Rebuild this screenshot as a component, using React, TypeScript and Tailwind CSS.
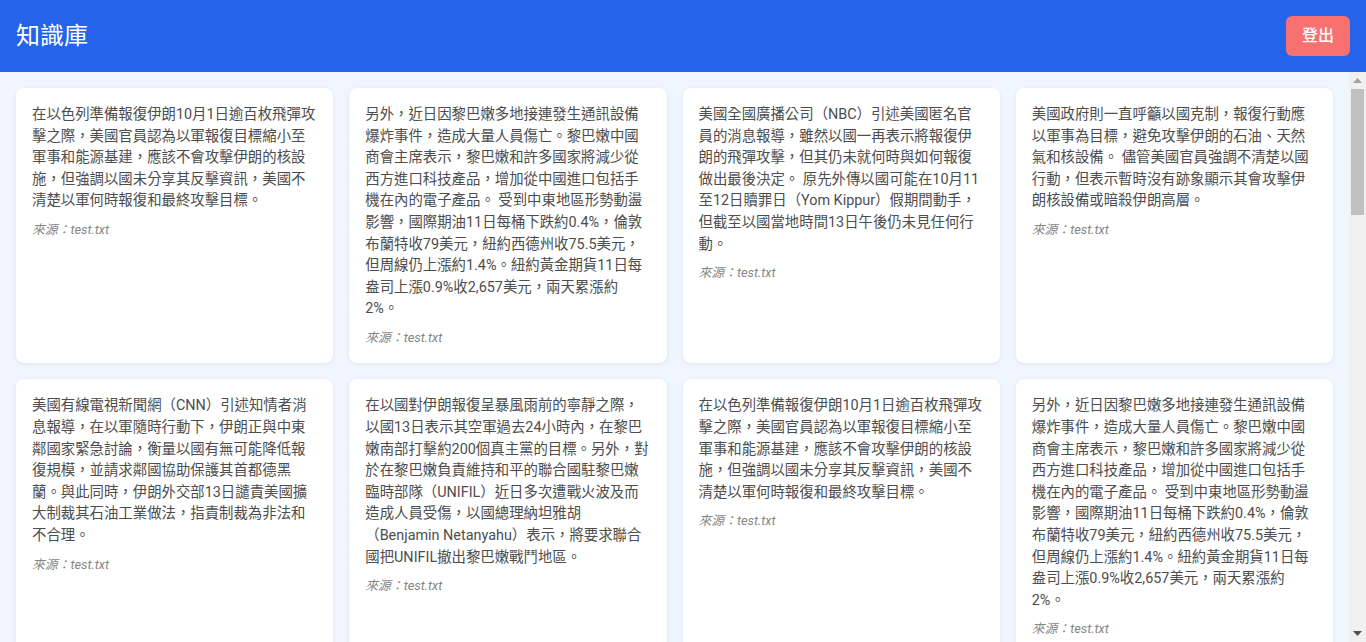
const texts = [
  "在以色列準備報復伊朗10月1日逾百枚飛彈攻擊之際，美國官員認為以軍報復目標縮小至軍事和能源基建，應該不會攻擊伊朗的核設施，但強調以國未分享其反擊資訊，美國不清楚以軍何時報復和最終攻擊目標。",
  "另外，近日因黎巴嫩多地接連發生通訊設備爆炸事件，造成大量人員傷亡。黎巴嫩中國商會主席表示，黎巴嫩和許多國家將減少從西方進口科技產品，增加從中國進口包括手機在內的電子產品。 受到中東地區形勢動盪影響，國際期油11日每桶下跌約0.4%，倫敦布蘭特收79美元，紐約西德州收75.5美元，但周線仍上漲約1.4%。紐約黃金期貨11日每盎司上漲0.9%收2,657美元，兩天累漲約2%。",
  "美國全國廣播公司（NBC）引述美國匿名官員的消息報導，雖然以國一再表示將報復伊朗的飛彈攻擊，但其仍未就何時與如何報復做出最後決定。 原先外傳以國可能在10月11至12日贖罪日（Yom Kippur）假期間動手，但截至以國當地時間13日午後仍未見任何行動。",
  "美國政府則一直呼籲以國克制，報復行動應以軍事為目標，避免攻擊伊朗的石油、天然氣和核設備。 儘管美國官員強調不清楚以國行動，但表示暫時沒有跡象顯示其會攻擊伊朗核設備或暗殺伊朗高層。",
  "美國有線電視新聞網（CNN）引述知情者消息報導，在以軍隨時行動下，伊朗正與中東鄰國家緊急討論，衡量以國有無可能降低報復規模，並請求鄰國協助保護其首都德黑蘭。與此同時，伊朗外交部13日譴責美國擴大制裁其石油工業做法，指責制裁為非法和不合理。",
  "在以國對伊朗報復呈暴風雨前的寧靜之際，以國13日表示其空軍過去24小時內，在黎巴嫩南部打擊約200個真主黨的目標。另外，對於在黎巴嫩負責維持和平的聯合國駐黎巴嫩臨時部隊（UNIFIL）近日多次遭戰火波及而造成人員受傷，以國總理納坦雅胡（Benjamin Netanyahu）表示，將要求聯合國把UNIFIL撤出黎巴嫩戰鬥地區。",
];

const docs = Array.from({ length: 32 }, (_, i) => ({
  id: i,
  content: texts[i % texts.length],
  source: "test.txt",
}));

const DocCard = ({ content, source }: { content: string; source: string }) => (
  <div className="bg-white rounded-lg shadow-[0_1px_4px_rgba(0,0,0,0.08)] p-4">
    <p className="text-[0.9rem] leading-[1.5] text-[#4d4d4d]">{content}</p>
    <p className="mt-2 text-[0.8rem] leading-[1.5] italic text-[#858585]">
      來源：{source}
    </p>
  </div>
);

// classic scrollbar look (headless hides the native one)
const ScrollTrack = () => (
  <div className="w-[17px] shrink-0 bg-[#f1f1f1] flex flex-col">
    <div className="h-[17px] flex items-center justify-center">
      <svg width="9" height="5" viewBox="0 0 9 5">
        <path d="M4.5 0L9 5H0z" fill="#a3a3a3" />
      </svg>
    </div>
    <div className="mx-[2px] h-[126px] bg-[#c1c1c1]" />
    <div className="flex-1" />
    <div className="h-[17px] flex items-center justify-center">
      <svg width="9" height="5" viewBox="0 0 9 5">
        <path d="M0 0H9L4.5 5z" fill="#505050" />
      </svg>
    </div>
  </div>
);

export default function App() {
  return (
    <div className="h-screen flex flex-col bg-[#eff6ff] font-['Segoe_UI',Roboto,'Noto_Sans_CJK_TC',sans-serif]">
      {/* top bar */}
      <header className="h-[72px] shrink-0 bg-[#2563eb] flex items-center justify-between px-4">
        <h1 className="text-2xl text-white">知識庫</h1>
        <button className="bg-[#f87171] text-white font-medium px-4 py-2 rounded-md leading-6">
          登出
        </button>
      </header>

      <div className="flex-1 min-h-0 flex">
        <main className="flex-1 overflow-y-auto p-4">
          <div className="grid grid-cols-4 gap-4">
            {docs.map((d) => (
              <DocCard key={d.id} content={d.content} source={d.source} />
            ))}
          </div>
        </main>
        <ScrollTrack />
      </div>
    </div>
  );
}
